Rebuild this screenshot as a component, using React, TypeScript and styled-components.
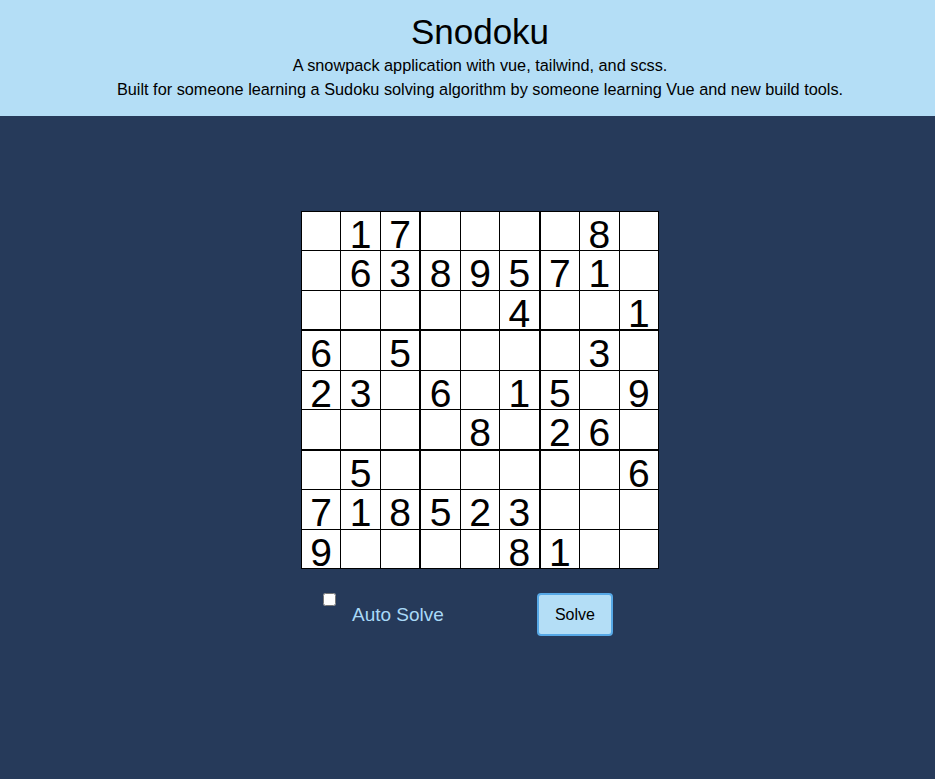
import React from "react";
import styled, { createGlobalStyle } from "styled-components";

const GlobalStyle = createGlobalStyle`
  html, body {
    margin: 0;
    padding: 0;
    background: #263a5a;
    min-height: 100%;
  }
  body {
    font-family: "Liberation Sans", Arial, Helvetica, sans-serif;
    min-height: 779px;
  }
`;

const Page = styled.div`
  min-height: 779px;
  background: #263a5a;
`;

const Header = styled.header`
  background: #b4def6;
  color: #000;
  text-align: center;
  padding: 11px 0 15px 25px;
`;

const Title = styled.h1`
  margin: 0 0 1px;
  font-size: 35px;
  line-height: 41px;
  font-weight: 400;
`;

const Tagline = styled.p`
  margin: 0;
  font-size: 16.3px;
  line-height: 24px;
`;

const Main = styled.main`
  display: flex;
  flex-direction: column;
  align-items: center;
  padding: 95px 0 0 25px;
`;

const Board = styled.div`
  width: 358px;
  height: 358px;
  box-sizing: border-box;
  padding: 1px;
  background: #000;
  display: grid;
  grid-template-columns: repeat(3, minmax(0, 1fr));
  grid-template-rows: repeat(3, minmax(0, 1fr));
  gap: 2px;
`;

const Box = styled.div`
  display: grid;
  grid-template-columns: repeat(3, minmax(0, 1fr));
  grid-template-rows: repeat(3, minmax(0, 1fr));
  gap: 1px;
  min-height: 0;
`;

const Cell = styled.div`
  background: #fff;
  color: #000;
  text-align: center;
  font-size: 39px;
  line-height: 46px;
  min-height: 0;
  overflow: visible;
`;

const Controls = styled.div`
  width: 358px;
  display: flex;
  align-items: center;
  margin-top: 24px;
  height: 43px;
`;

const AutoGroup = styled.label`
  display: flex;
  align-items: center;
  align-self: stretch;
  margin-left: 22px;
`;

const Check = styled.input`
  align-self: flex-start;
  width: 13px;
  height: 13px;
  margin: 0;
`;

const AutoText = styled.span`
  margin-left: 16px;
  margin-top: 1px;
  color: #a9d9f7;
  font-size: 19px;
`;

const SolveButton = styled.button`
  margin-left: 93px;
  width: 76px;
  height: 43px;
  box-sizing: border-box;
  background: #b4def6;
  border: 2px solid #56a8e6;
  border-radius: 4px;
  color: #000;
  font-family: "Liberation Sans", Arial, Helvetica, sans-serif;
  font-size: 16px;
  padding: 0;
  cursor: pointer;
`;

const puzzle: (number | null)[][] = [
  [null, 1, 7, null, null, null, null, 8, null],
  [null, 6, 3, 8, 9, 5, 7, 1, null],
  [null, null, null, null, null, 4, null, null, 1],
  [6, null, 5, null, null, null, null, 3, null],
  [2, 3, null, 6, null, 1, 5, null, 9],
  [null, null, null, null, 8, null, 2, 6, null],
  [null, 5, null, null, null, null, null, null, 6],
  [7, 1, 8, 5, 2, 3, null, null, null],
  [9, null, null, null, null, 8, 1, null, null],
];

export default function App() {
  const boxes = [];
  for (let br = 0; br < 3; br++) {
    for (let bc = 0; bc < 3; bc++) {
      const cells = [];
      for (let r = 0; r < 3; r++) {
        for (let c = 0; c < 3; c++) {
          const v = puzzle[br * 3 + r][bc * 3 + c];
          cells.push(<Cell key={`${r}-${c}`}>{v ?? ""}</Cell>);
        }
      }
      boxes.push(<Box key={`${br}-${bc}`}>{cells}</Box>);
    }
  }
  return (
    <Page>
      <GlobalStyle />
      <Header>
        <Title>Snodoku</Title>
        <Tagline>A snowpack application with vue, tailwind, and scss.</Tagline>
        <Tagline>
          Built for someone learning a Sudoku solving algorithm by someone learning Vue and new build tools.
        </Tagline>
      </Header>
      <Main>
        <Board>{boxes}</Board>
        <Controls>
          <AutoGroup>
            <Check type="checkbox" />
            <AutoText>Auto Solve</AutoText>
          </AutoGroup>
          <SolveButton>Solve</SolveButton>
        </Controls>
      </Main>
    </Page>
  );
}
